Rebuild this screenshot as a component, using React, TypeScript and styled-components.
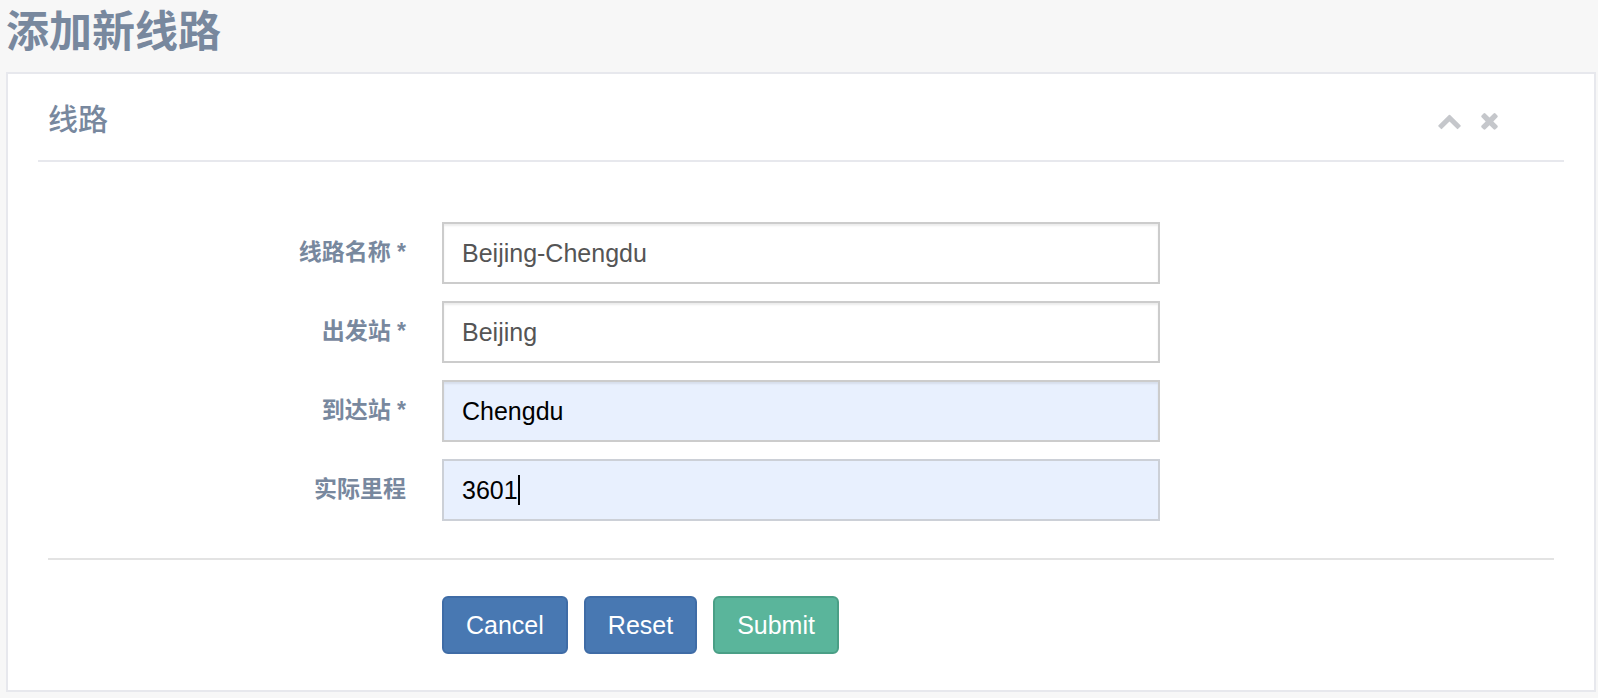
import React from "react";
import styled, { createGlobalStyle, css } from "styled-components";

const GlobalStyle = createGlobalStyle`
  *, *::before, *::after {
    box-sizing: border-box;
  }
  body {
    margin: 0;
    background: #f7f7f7;
    color: #78889e;
    font-family: "Liberation Sans", "Noto Sans CJK SC", sans-serif;
    font-size: 25px;
  }
`;

const Page = styled.main`
  padding: 0 2px 6px 6px;
`;

const PageTitle = styled.h1`
  margin: 0;
  height: 72px;
  font-size: 43px;
  line-height: 64px;
  font-weight: 700;
`;

const Panel = styled.section`
  padding: 20px 30px 36px;
  background: #fff;
  border: 2px solid #e7e8ed;
`;

const PanelHeader = styled.header`
  display: flex;
  align-items: flex-start;
  justify-content: space-between;
  height: 68px;
  padding: 6px 62px 0 10px;
  border-bottom: 2px solid #e7e8ed;
`;

const PanelTitle = styled.h2`
  margin: 0;
  font-size: 30px;
  line-height: 40px;
  font-weight: 500;
`;

const Toolbox = styled.div`
  display: flex;
  align-items: center;
  gap: 15px;
  height: 40px;
`;

const ToolButton = styled.button`
  display: flex;
  padding: 0;
  border: 0;
  background: none;
  color: #c5c7cb;
  cursor: pointer;
`;

const Form = styled.form`
  padding: 60px 10px 0;
`;

const Fields = styled.div`
  display: grid;
  gap: 17px;
`;

const FormRow = styled.div`
  display: grid;
  grid-template-columns: 1fr 2fr 1fr;
  column-gap: 35px;
`;

const Label = styled.label`
  padding-right: 1px;
  font-size: 23px;
  line-height: 61px;
  font-weight: 700;
  text-align: right;
`;

const InputWrap = styled.div`
  position: relative;
`;

const TextInput = styled.input<{ $filled?: boolean; $active?: boolean }>`
  display: block;
  width: 100%;
  height: 62px;
  padding: 0 18px;
  border: 2px solid #ccc;
  border-radius: 0;
  outline: none;
  background: #fff;
  color: #555;
  font: inherit;
  box-shadow: inset 0 2px 2px rgba(0, 0, 0, 0.075);
  ${(p) =>
    p.$filled &&
    css`
      background: #e8f0fe;
      color: #000;
    `}
  ${(p) =>
    p.$active &&
    css`
      border-color: #ccd0d7;
      box-shadow: none;
      caret-color: transparent;
    `}
`;

const Caret = styled.span`
  position: absolute;
  top: 16px;
  left: 76px;
  width: 2px;
  height: 30px;
  background: #000;
`;

const Divider = styled.hr`
  margin: 37px 0 36px;
  border: 0;
  border-top: 2px solid #e3e3e3;
`;

const Actions = styled.div`
  grid-column: 2;
  display: flex;
  gap: 16px;
`;

const Button = styled.button<{ $success?: boolean }>`
  height: 58px;
  padding: 0 22px;
  border: 2px solid ${(p) => (p.$success ? "#4a9f86" : "#3f6ca6")};
  border-radius: 6px;
  background: ${(p) => (p.$success ? "#5ab59b" : "#4878b2")};
  color: #fff;
  font: inherit;
  cursor: pointer;
`;

const ChevronUp = () => (
  <svg width="25" height="25" viewBox="0 0 1792 1792" fill="currentColor" aria-hidden="true">
    <path d="M1683 1331l-166 165q-19 19-45 19t-45-19l-531-531-531 531q-19 19-45 19t-45-19l-166-165q-19-19-19-45.5t19-45.5l742-741q19-19 45-19t45 19l742 741q19 19 19 45.5t-19 45.5z" />
  </svg>
);

const Times = () => (
  <svg width="25" height="25" viewBox="0 0 1792 1792" fill="currentColor" aria-hidden="true">
    <path d="M1490 1322q0 40-28 68l-136 136q-28 28-68 28t-68-28l-294-294-294 294q-28 28-68 28t-68-28l-136-136q-28-28-28-68t28-68l294-294-294-294q-28-28-28-68t28-68l136-136q28-28 68-28t68 28l294 294 294-294q28-28 68-28t68 28l136 136q28 28 28 68t-28 68l-294 294 294 294q28 28 28 68z" />
  </svg>
);

const fields = [
  { id: "name", label: "线路名称 *", value: "Beijing-Chengdu" },
  { id: "start", label: "出发站 *", value: "Beijing" },
  { id: "end", label: "到达站 *", value: "Chengdu", filled: true },
  { id: "mileage", label: "实际里程", value: "3601", filled: true, active: true },
];

export default function App() {
  return (
    <>
      <GlobalStyle />
      <Page lang="zh-CN">
        <PageTitle>添加新线路</PageTitle>
        <Panel>
          <PanelHeader>
            <PanelTitle>线路</PanelTitle>
            <Toolbox>
              <ToolButton type="button" aria-label="收起">
                <ChevronUp />
              </ToolButton>
              <ToolButton type="button" aria-label="关闭">
                <Times />
              </ToolButton>
            </Toolbox>
          </PanelHeader>
          <Form onSubmit={(e) => e.preventDefault()}>
            <Fields>
              {fields.map((f) => (
                <FormRow key={f.id}>
                  <Label htmlFor={f.id}>{f.label}</Label>
                  <InputWrap>
                    <TextInput
                      id={f.id}
                      type="text"
                      defaultValue={f.value}
                      $filled={f.filled}
                      $active={f.active}
                    />
                    {f.active && <Caret />}
                  </InputWrap>
                </FormRow>
              ))}
            </Fields>
            <Divider />
            <FormRow>
              <Actions>
                <Button type="button">Cancel</Button>
                <Button type="reset">Reset</Button>
                <Button type="submit" $success>
                  Submit
                </Button>
              </Actions>
            </FormRow>
          </Form>
        </Panel>
      </Page>
    </>
  );
}
